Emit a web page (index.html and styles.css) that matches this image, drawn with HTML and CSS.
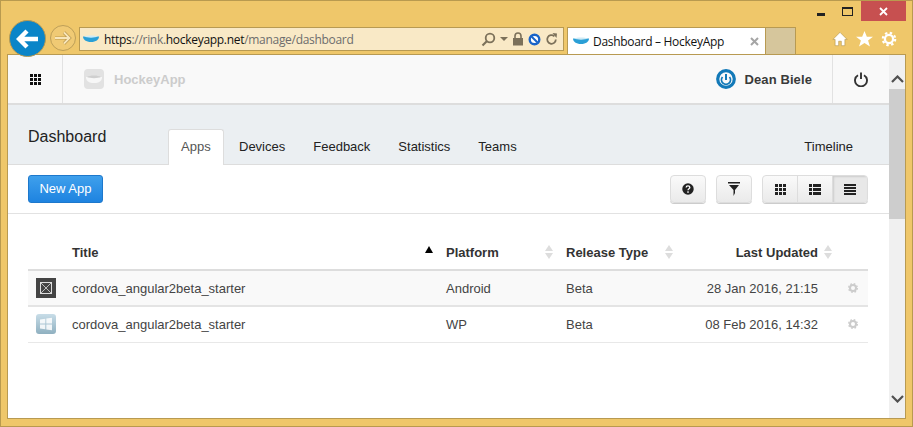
FILE: index.html
```html
<!DOCTYPE html>
<html lang="en">
<head>
<meta charset="utf-8">
<title>Dashboard – HockeyApp</title>
<link rel="stylesheet" href="styles.css">
</head>
<body>
<div class="window">
  <div class="titlebar">
    <span class="ctl ctl-min"><i class="min-glyph"></i></span>
    <span class="ctl ctl-max"><i class="max-glyph"></i></span>
    <span class="ctl ctl-close"><svg width="11" height="11" viewBox="0 0 11 11"><path d="M2 2l7 7M9 2l-7 7" stroke="#fff" stroke-width="1.8"/></svg></span>
  </div>
  <div class="navbar">
    <span class="back"><svg width="24" height="20" viewBox="0 0 24 20"><path d="M11 2L3 10l8 8M3 10h19" fill="none" stroke="#fff" stroke-width="4.4"/></svg></span>
    <span class="forward"><svg width="18" height="14" viewBox="0 0 18 14"><path d="M10 1.500l5.500 5.500-5.500 5.500M15 7H1" fill="none" stroke="#b9974d" stroke-width="3.200"/><path d="M10 1.500l5.500 5.500-5.500 5.500M15 7H1" fill="none" stroke="#f8e6ba" stroke-width="1.800"/></svg></span>
    <div class="address">
      <svg class="favicon" width="17" height="8" viewBox="0 0 17 8"><path d="M0 1.500h16c0 3-3 5.500-8 5.500S0 4.500 0 1.500z" fill="#2a9fd6"/><path d="M1 1.500c3-1.500 11-1.500 14 0-3 1.500-11 1.500-14 0z" fill="#cfeaf5"/></svg>
      <span class="url"><b>https</b>://rink.<b>hockeyapp.net</b>/manage/dashboard</span>
      <span class="addr-tools">
        <svg width="15" height="15" viewBox="0 0 15 15"><circle cx="9" cy="6" r="4.300" fill="none" stroke="#7c715a" stroke-width="1.800"/><path d="M6 9l-4.500 4.500" stroke="#7c715a" stroke-width="2.200"/></svg>
        <svg width="8" height="5" viewBox="0 0 8 5"><path d="M0 0h8L4 4z" fill="#7c715a"/></svg>
        <svg width="12" height="14" viewBox="0 0 12 14"><path d="M3 6V4a3 3 0 016 0v2" fill="none" stroke="#7c715a" stroke-width="1.600"/><rect x="1" y="6" width="10" height="7.500" fill="#7c715a"/></svg>
        <svg width="13" height="13" viewBox="0 0 13 13"><circle cx="6.500" cy="6.500" r="4.800" fill="#fff" stroke="#1a64c8" stroke-width="2.400"/><path d="M3.500 3.500l6 6" stroke="#1a64c8" stroke-width="2"/></svg>
        <svg width="13" height="13" viewBox="0 0 13 13"><path d="M10.800 6.500a4.300 4.300 0 11-1.400-3.200" fill="none" stroke="#7c715a" stroke-width="1.800"/><path d="M7.500 0l4.500 .5-.5 4.500z" fill="#7c715a"/></svg>
      </span>
    </div>
    <div class="tab">
      <svg class="favicon" width="17" height="8" viewBox="0 0 17 8"><path d="M0 1.500h16c0 3-3 5.500-8 5.500S0 4.500 0 1.500z" fill="#2a9fd6"/><path d="M1 1.500c3-1.500 11-1.500 14 0-3 1.500-11 1.500-14 0z" fill="#cfeaf5"/></svg>
      <span class="tab-title">Dashboard – HockeyApp</span>
      <svg class="tab-x" width="9" height="9" viewBox="0 0 9 9"><path d="M1 1l7 7M8 1L1 8" stroke="#a5a5a5" stroke-width="2"/></svg>
    </div>
    <div class="newtab"></div>
    <div class="browser-tools">
      <svg width="16" height="16" viewBox="0 0 18 17"><path d="M9 1L1 9h2.500v7H7.500v-5h3v5h4V9H17z" fill="#fff" stroke="#a98a3f" stroke-width=".6"/></svg>
      <svg width="17" height="16" viewBox="0 0 18 17"><path d="M9 0l2.500 6H18l-5.200 4 2 6.500L9 12.700 3.200 16.500l2-6.500L0 6h6.500z" fill="#fff"/></svg>
      <svg width="16" height="16" viewBox="0 0 18 18"><circle cx="9" cy="9" r="4.600" fill="none" stroke="#fff" stroke-width="2.600"/><circle cx="9" cy="9" r="7" fill="none" stroke="#fff" stroke-width="2.400" stroke-dasharray="2.750 2.750"/></svg>
    </div>
  </div>
  <div class="frame">
    <div class="page">
      <header class="top">
        <div class="apps-grid"><svg width="11" height="11" viewBox="0 0 11 11"><path d="M0 0h3v3H0zM4 0h3v3H4zM8 0h3v3H8zM0 4h3v3H0zM4 4h3v3H4zM8 4h3v3H8zM0 8h3v3H0zM4 8h3v3H4zM8 8h3v3H8z" fill="#111"/></svg></div>
        <div class="brand">
          <svg width="20" height="20" viewBox="0 0 20 20"><rect width="20" height="20" rx="4" fill="#e2e2e2"/><path d="M2 8h16c0 4-3 6-8 6s-8-2-8-6z" fill="#f7f7f7"/><path d="M3 8c3-2 11-2 14 0-3 1.500-11 1.500-14 0z" fill="#cfcfcf"/></svg>
          <span>HockeyApp</span>
        </div>
        <div class="user">
          <svg width="20" height="20" viewBox="0 0 20 20"><circle cx="10" cy="10" r="8.300" fill="none" stroke="#1279b8" stroke-width="3.200"/><path d="M6.500 8a4.500 4.500 0 107 0" fill="none" stroke="#1279b8" stroke-width="1.800"/><path d="M10 5v6" stroke="#1279b8" stroke-width="2"/></svg>
          <span>Dean Biele</span>
        </div>
        <div class="power"><svg width="14" height="15" viewBox="0 0 14 15"><path d="M4 3.200a6 6 0 106 0" fill="none" stroke="#333" stroke-width="1.900"/><path d="M7 .5v6.500" stroke="#333" stroke-width="1.900"/></svg></div>
      </header>
      <section class="subnav">
        <h1>Dashboard</h1>
        <nav class="tabs">
          <a class="active">Apps</a>
          <a>Devices</a>
          <a>Feedback</a>
          <a>Statistics</a>
          <a>Teams</a>
          <a class="timeline">Timeline</a>
        </nav>
      </section>
      <section class="toolbar">
        <button class="primary">New App</button>
        <div class="actions">
          <button class="tbtn"><svg width="12" height="12" viewBox="0 0 13 13"><circle cx="6.500" cy="6.500" r="6.200" fill="#222"/><path d="M4.500 5a2 1.800 0 114 0c0 1.300-2 1.300-2 2.800" fill="none" stroke="#fff" stroke-width="1.400"/><rect x="5.700" y="9" width="1.600" height="1.600" fill="#fff"/></svg></button>
          <button class="tbtn"><svg width="12" height="14" viewBox="0 0 12 14"><path d="M0 0h12v1.500H0z" fill="#222"/><path d="M1 3h10L7 8v3l-1.500 3V8z" fill="#222"/></svg></button>
          <div class="group">
            <button><svg width="11" height="11" viewBox="0 0 11 11"><path d="M0 0h3v3H0zM4 0h3v3H4zM8 0h3v3H8zM0 4h3v3H0zM4 4h3v3H4zM8 4h3v3H8zM0 8h3v3H0zM4 8h3v3H4zM8 8h3v3H8z" fill="#222"/></svg></button>
            <button><svg width="12" height="11" viewBox="0 0 12 11"><path d="M0 0h3v3H0zM4 0h8v3H4zM0 4h3v3H0zM4 4h8v3H4zM0 8h3v3H0zM4 8h8v3H4z" fill="#222"/></svg></button>
            <button class="on"><svg width="12" height="11" viewBox="0 0 12 11"><path d="M0 0h12v2H0zM0 3h12v2H0zM0 6h12v2H0zM0 9h12v2H0z" fill="#222"/></svg></button>
          </div>
        </div>
      </section>
      <table class="apps">
        <thead>
          <tr>
            <th class="c-icon"></th>
            <th class="c-title"><div class="th-in"><span>Title</span><i class="sort-up"></i></div></th>
            <th class="c-plat"><div class="th-in"><span>Platform</span><i class="sort"></i></div></th>
            <th class="c-type"><div class="th-in"><span>Release Type</span><i class="sort"></i></div></th>
            <th class="c-date"><div class="th-in right"><span>Last Updated</span><i class="sort"></i></div></th>
            <th class="c-gear"></th>
          </tr>
        </thead>
        <tbody>
          <tr class="alt">
            <td class="c-icon"><span class="appicon dark"><svg width="12" height="12" viewBox="0 0 12 12"><rect x=".5" y=".5" width="11" height="11" fill="none" stroke="#ddd"/><path d="M1 1l10 10M11 1L1 11" stroke="#ddd" stroke-width=".8"/></svg></span></td>
            <td>cordova_angular2beta_starter</td>
            <td>Android</td>
            <td>Beta</td>
            <td class="date">28 Jan 2016, 21:15</td>
            <td class="c-gear"><svg width="10" height="10" viewBox="0 0 10 10"><circle cx="5" cy="5" r="3" fill="none" stroke="#ccc" stroke-width="2"/><circle cx="5" cy="5" r="4.300" fill="none" stroke="#ccc" stroke-width="1.400" stroke-dasharray="1.700 1.700"/></svg></td>
          </tr>
          <tr>
            <td class="c-icon"><span class="appicon win"><svg width="14" height="14" viewBox="0 0 14 14"><path d="M1 2.500l5.300-.8v4.800H1zM7.300 1.600L13 .8v5.700H7.300zM1 7.500h5.300v4.800L1 11.500zM7.300 7.500H13v5.700l-5.700-.8z" fill="#fff" opacity=".85"/></svg></span></td>
            <td>cordova_angular2beta_starter</td>
            <td>WP</td>
            <td>Beta</td>
            <td class="date">08 Feb 2016, 14:32</td>
            <td class="c-gear"><svg width="10" height="10" viewBox="0 0 10 10"><circle cx="5" cy="5" r="3" fill="none" stroke="#ccc" stroke-width="2"/><circle cx="5" cy="5" r="4.300" fill="none" stroke="#ccc" stroke-width="1.400" stroke-dasharray="1.700 1.700"/></svg></td>
          </tr>
        </tbody>
      </table>
    </div>
    <div class="scrollbar">
      <span class="arrow"><svg width="13" height="8" viewBox="0 0 13 8"><path d="M1 7l5.500-5.500L12 7" fill="none" stroke="#505050" stroke-width="2.200"/></svg></span>
      <span class="thumb"></span>
      <span class="arrow arrow-down"><svg width="13" height="8" viewBox="0 0 13 8"><path d="M1 1l5.500 5.500L12 1" fill="none" stroke="#505050" stroke-width="2.200"/></svg></span>
    </div>
  </div>
</div>
</body>
</html>
```

FILE: styles.css
```css
* { box-sizing: border-box; }
html, body { margin: 0; height: 100%; overflow: hidden; }
body { font-family: "Liberation Sans", Arial, sans-serif; font-size: 13px; color: #333; }
.window { width: 913px; height: 427px; background: #efc76a; border: 1px solid #b99a4f; padding: 0 7px 7px 6px; display: flex; flex-direction: column; }
.titlebar { height: 20px; display: flex; justify-content: flex-end; align-items: stretch; flex: none; margin-right: -1px; }
.ctl { display: flex; align-items: center; justify-content: center; }
.ctl-min { width: 27px; }
.ctl-max { width: 27px; }
.ctl-close { width: 45px; background: #c75050; }
.min-glyph { width: 8px; height: 3px; background: #222; margin-top: 6px; }
.max-glyph { width: 11px; height: 9px; border: 1px solid #222; border-top-width: 2px; }
.navbar { height: 33px; flex: none; display: flex; align-items: flex-end; margin-left: 2px; position: relative; z-index: 2; }
.back { width: 37px; height: 37px; border-radius: 50%; background: #0a85c8; border: 1px solid #b89a52; display: flex; align-items: center; justify-content: center; flex: none; margin-bottom: -3px; }
.forward { width: 26px; height: 26px; border-radius: 50%; border: 1px solid #bd9f58; background: #f0ca74; display: flex; align-items: center; justify-content: center; margin: 0 0 3px 4px; flex: none; }
.address { width: 485px; height: 24px; margin: 0 3px 3px 3px; background: #f9e9c6; border: 1px solid #b89a52; display: flex; align-items: center; padding: 0 5px 0 3px; flex: none; }
.favicon { flex: none; }
.url { margin-left: 4px; font-family: "Open Sans", "Liberation Sans", sans-serif; font-size: 12px; color: #6d6d6d; letter-spacing: -.3px; white-space: nowrap; }
.url b { font-weight: 400; color: #111; }
.addr-tools { margin-left: auto; display: flex; align-items: center; gap: 4px; }
.tab { width: 199px; height: 27px; background: #fff; border: 1px solid #b89a52; border-bottom: 0; display: flex; align-items: center; padding: 0 6px 0 5px; flex: none; }
.tab-title { margin-left: 3px; font-family: "Open Sans", "Liberation Sans", sans-serif; font-size: 12px; color: #111; letter-spacing: -.3px; white-space: nowrap; }
.tab-x { margin-left: auto; }
.newtab { width: 30px; height: 27px; background: #d6c69c; border: 1px solid #b89a52; border-left: 0; border-bottom: 0; flex: none; }
.browser-tools { margin: 0 0 7px auto; display: flex; gap: 8px; padding-right: 8px; align-items: center; }
.frame { flex: 1; min-height: 0; display: flex; background: #fff; border: 1px solid #b89a52; border-right: 0; box-shadow: 1px 0 #b89a52; }
.page { width: 881px; flex: none; background: #fff; }
.scrollbar { width: 16px; background: #f0f0f0; display: flex; flex-direction: column; align-items: center; }
.arrow { height: 34px; flex: none; display: flex; align-items: center; justify-content: center; padding-top: 14px; }
.arrow-down { margin-top: auto; height: 34px; padding: 0 0 4px; }
.thumb { width: 16px; height: 130px; background: #cdcdcd; }
.top { height: 50px; display: flex; align-items: stretch; background: #f9f9f9; border-bottom: 2px solid #ddd; }
.apps-grid { width: 55px; border-right: 1px solid #e2e2e2; display: flex; align-items: center; justify-content: center; }
.brand { display: flex; align-items: center; gap: 10px; padding-left: 21px; font-weight: 700; font-size: 13px; color: #ccc; flex: 1; }
.user { display: flex; align-items: center; gap: 9px; font-weight: 700; font-size: 13px; color: #3a3a3a; padding-right: 20px; letter-spacing: .1px; }
.power { width: 57px; border-left: 1px solid #e2e2e2; display: flex; align-items: center; justify-content: center; }
.subnav { height: 60px; background: #ebeff2; border-bottom: 1px solid #ddd; display: flex; align-items: flex-end; padding-left: 20px; }
h1 { font-weight: 400; font-size: 16px; color: #222; margin: 0 61px 18px 0; line-height: 18px; width: 79px; flex: none; }
.tabs { flex: 1; display: flex; align-items: flex-end; margin-bottom: -1px; padding-right: 24px; }
.tabs a { height: 35px; padding: 9px 14px 0 14px; font-size: 13px; line-height: 16px; color: #222; white-space: nowrap; }
.tabs a.active { height: 36px; margin-right: 1px; background: #fff; border: 1px solid #ddd; border-bottom: 0; border-radius: 3px 3px 0 0; color: #555; padding: 9px 12px 0 12px; width: 56px; }
.tabs a.timeline { margin-left: auto; padding: 9px 12px 0 0; }
.toolbar { height: 49px; display: flex; align-items: center; justify-content: space-between; padding: 0 21px 0 20px; border-bottom: 1px solid #e2e2e2; }
button { font-family: inherit; padding: 0; cursor: pointer; }
.primary { width: 75px; height: 28px; padding-bottom: 2px; border-radius: 3px; border: 1px solid #1d78cc; background: linear-gradient(#3fa0ec, #1e83e0); color: #fff; font-size: 13px; }
.actions { display: flex; gap: 10px; align-items: center; }
.tbtn, .group { height: 28px; border-radius: 4px; border: 1px solid #ddd; background: linear-gradient(#fafafa, #eaeaea); box-shadow: 0 1px 0 #ccc; }
.tbtn { width: 36px; display: flex; align-items: center; justify-content: center; }
.group { display: flex; width: 106px; overflow: hidden; }
.group button { flex: 1; border: 0; border-right: 1px solid #ddd; background: none; display: flex; align-items: center; justify-content: center; }
.group button:last-child { border-right: 0; }
.group button.on { background: #e8e8e8; box-shadow: inset 1px 1px 2px #ccc; }
.apps { margin: 19px 21px 0 20px; width: 840px; border-collapse: collapse; table-layout: fixed; font-size: 13px; }
.apps th { height: 37px; padding: 2px 0 0; font-size: 13px; font-weight: 700; text-align: left; color: #333; border-bottom: 2px solid #ddd; }
.apps td { height: 36px; padding: 0; color: #444; border-bottom: 1px solid #e8e8e8; white-space: nowrap; }
.apps tbody tr:first-child td { border-bottom: 2px solid #e4e4e4; }
.alt td { background: #f9f9f9; }
.c-icon { width: 44px; }
.c-title { width: 374px; }
.c-plat { width: 120px; }
.c-type { width: 120px; }
.c-date { width: 132px; }
.c-gear { width: 50px; text-align: right; padding-right: 3px !important; }
.c-gear svg { display: block; margin: 0 7px 0 auto; }
.th-in { display: flex; align-items: center; justify-content: space-between; padding-right: 12px; }
.th-in.right { justify-content: flex-end; gap: 6px; padding-right: 0; margin-right: -15px; }
.sort, .sort-up { display: block; width: 9px; height: 14px; flex: none; position: relative; }
.sort::before, .sort::after { content: ""; position: absolute; left: 0; border-left: 4.500px solid transparent; border-right: 4.500px solid transparent; }
.sort::before { top: 0; border-bottom: 6px solid #ddd; }
.sort::after { bottom: 0; border-top: 6px solid #ddd; }
.sort-up { height: 7px; margin: -5px 1px 0 0; border-left: 4.500px solid transparent; border-right: 4.500px solid transparent; border-bottom: 7px solid #000; width: 0; }
.date { text-align: right; }
.appicon { display: flex; width: 20px; height: 20px; margin-left: 8px; align-items: center; justify-content: center; }
.appicon.dark { background: #444; }
.appicon.win { background: linear-gradient(#c8dde8, #8fb0c0); border-radius: 3px; }
```
